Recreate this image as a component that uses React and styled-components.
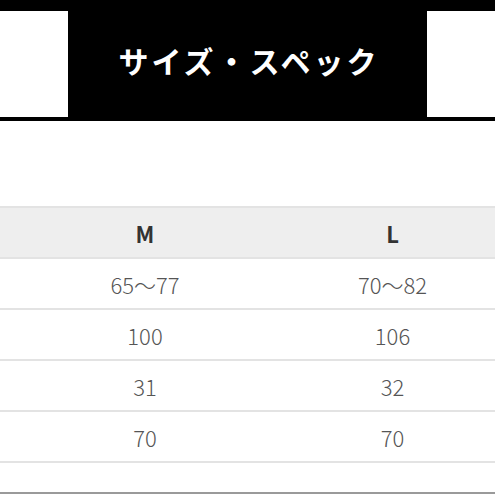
import React from 'react'
import styled, { createGlobalStyle } from 'styled-components'

const GlobalStyle = createGlobalStyle`
  html, body {
    margin: 0;
    padding: 0;
    background: #fff;
  }
  body {
    font-family: "Noto Sans CJK JP", "Noto Sans", sans-serif;
  }
`

const Page = styled.div`
  width: 495px;
  height: 495px;
  overflow: hidden;
  background: #fff;
`

const Banner = styled.header`
  display: flex;
  justify-content: center;
  border-top: 11px solid #000;
  border-bottom: 4px solid #000;
  height: 106px;
`

const TitleBox = styled.div`
  width: 359px;
  margin-top: -11px;
  background: #000;
  display: flex;
  align-items: center;
  justify-content: center;
`

const Title = styled.h2`
  margin: 0;
  color: #fff;
  font-size: 30px;
  font-weight: 700;
  letter-spacing: 3px;
  padding-top: 2px;
  padding-left: 3px;
`

const Table = styled.div`
  margin-top: 85px;
  border-bottom: 2px solid #9a9a9a;
`

const Row = styled.div`
  display: grid;
  grid-template-columns: 290px 1fr;
  align-items: center;
  box-sizing: border-box;
  height: ${p => (p.$short ? '31px' : '51px')};
  border-top: 2px solid #e3e3e3;
  background: ${p => (p.$head ? '#eeeeee' : '#fff')};
`

const Cell = styled.div`
  text-align: center;
  font-size: 22px;
  font-weight: ${p => (p.$head ? 700 : 300)};
  color: ${p => (p.$head ? '#333' : '#555')};
`

const rows = [
  ['65〜77', '70〜82'],
  ['100', '106'],
  ['31', '32'],
  ['70', '70'],
]

export default function App() {
  return (
    <Page>
      <GlobalStyle />
      <Banner>
        <TitleBox>
          <Title>サイズ・スペック</Title>
        </TitleBox>
      </Banner>
      <Table>
        <Row $head>
          <Cell $head>M</Cell>
          <Cell $head>L</Cell>
        </Row>
        {rows.map((r, i) => (
          <Row key={i}>
            <Cell>{r[0]}</Cell>
            <Cell>{r[1]}</Cell>
          </Row>
        ))}
        <Row $short />
      </Table>
    </Page>
  )
}
